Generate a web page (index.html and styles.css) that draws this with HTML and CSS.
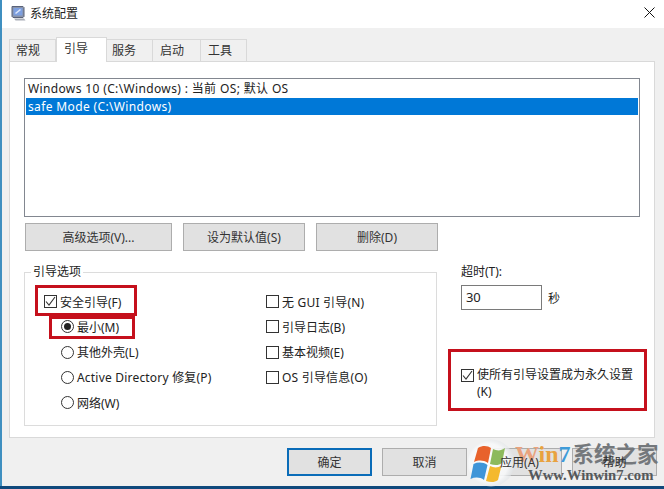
FILE: index.html
```html
<!DOCTYPE html>
<html lang="zh-CN">
<head>
<meta charset="utf-8">
<title>系统配置</title>
<link rel="stylesheet" href="styles.css">
</head>
<body>
<div class="window">
  <header class="titlebar">
    <svg class="app-icon" width="17" height="17" viewBox="0 0 17 17">
      <path d="M2 1.500h11l1 1v9l-1 1H3l-1-1z" fill="#8a94a8" stroke="#59627a"/>
      <path d="M3.500 3h9v7.500h-9z" fill="#7d9fe0"/>
      <path d="M5 8l5-4 1 1-5 4z" fill="#dfe8fa"/>
      <path d="M4 13.500h10l1.500 2H5.500z" fill="#a9aeb8"/>
    </svg>
    <span class="title-text">系统配置</span>
    <svg class="close" width="11" height="11" viewBox="0 0 11 11"><path d="M.5.5l10 10M10.500.5l-10 10" stroke="#111" stroke-width="1" fill="none"/></svg>
  </header>
  <main class="body">
    <nav class="tabs">
      <span class="tab tab-first">常规</span>
      <span class="tab tab-active">引导</span>
      <span class="tab tab-3">服务</span>
      <span class="tab tab-4">启动</span>
      <span class="tab tab-5">工具</span>
    </nav>
    <section class="panel">
      <div class="listbox">
        <div class="list-row">Windows 10 (C:\Windows) : 当前 OS; 默认 OS</div>
        <div class="list-row selected">safe Mode (C:\Windows)</div>
      </div>
      <div class="list-buttons">
        <button class="btn btn-wide">高级选项(V)...</button>
        <button class="btn btn-mid">设为默认值(S)</button>
        <button class="btn btn-mid">删除(D)</button>
      </div>
      <div class="options">
        <fieldset class="group">
          <legend class="group-label">引导选项</legend>
          <div class="group-cols">
            <div class="col col-left">
              <label class="opt"><span class="check"><svg width="11" height="11" viewBox="0 0 11 11"><path d="M1 5.500l3 3.500 6-8" fill="none" stroke="#333" stroke-width="1.100"/></svg></span>安全引导(F)</label>
              <label class="opt indent"><span class="radio on"></span>最小(M)</label>
              <label class="opt indent"><span class="radio"></span>其他外壳(L)</label>
              <label class="opt indent"><span class="radio"></span><span class="spaced">Active Directory 修复(P)</span></label>
              <label class="opt indent"><span class="radio"></span>网络(W)</label>
            </div>
            <div class="col col-right">
              <label class="opt"><span class="check"></span><span class="spaced">无 GUI 引导(N)</span></label>
              <label class="opt"><span class="check"></span>引导日志(B)</label>
              <label class="opt"><span class="check"></span>基本视频(E)</label>
              <label class="opt"><span class="check"></span><span class="spaced">OS 引导信息(O)</span></label>
            </div>
          </div>
        </fieldset>
        <div class="side">
          <div class="timeout-label">超时(T):</div>
          <div class="timeout-row"><span class="input">30</span><span class="unit">秒</span></div>
          <label class="permanent"><span class="check"><svg width="11" height="11" viewBox="0 0 11 11"><path d="M1 5.500l3 3.500 6-8" fill="none" stroke="#333" stroke-width="1.100"/></svg></span><span class="permanent-text">使所有引导设置成为永久设置<br>(K)</span></label>
        </div>
      </div>
    </section>
    <footer class="actions">
      <button class="btn btn-action btn-default"><span class="btn-label">确定</span></button>
      <button class="btn btn-action"><span class="btn-label">取消</span></button>
      <button class="btn btn-action"><span class="btn-label">应用(A)</span></button>
      <button class="btn btn-action"><span class="btn-label">帮助</span></button>
    </footer>
  </main>
  <div class="mark mark-1"></div>
  <div class="mark mark-2"></div>
  <div class="mark mark-3"></div>
  <div class="task-edge"></div>
  <div class="watermark">
    <svg class="wm-logo" width="48" height="48" viewBox="0 0 48 48">
      <defs>
        <radialGradient id="wm-glow" cx="45%" cy="50%" r="55%">
          <stop offset="0" stop-color="#ffffff" stop-opacity=".95"/>
          <stop offset=".75" stop-color="#f7f8f9" stop-opacity=".9"/>
          <stop offset="1" stop-color="#dfe3e6" stop-opacity=".55"/>
        </radialGradient>
      </defs>
      <circle cx="24" cy="24" r="23.500" fill="url(#wm-glow)"/>
      <path d="M11 9C16 6 21 7 24 9L21 24C16 21 12 21 7 23Z" fill="#e8622c"/>
      <path d="M26 10C30 12 34 12 38 9L35 24C31 27 27 26 23 25Z" fill="#8dba5c"/>
      <path d="M6.500 25C11 23 16 23 20.500 26L17 41C13 38 8 38 3.500 40Z" fill="#3f95d8"/>
      <path d="M23 27C27 29 31 29 34.500 26.500L31 41C27 44 23 43 19 42Z" fill="#f4b92e"/>
    </svg>
    <div class="wm-title"><span class="wm-w">W</span><span class="wm-in">in</span><span class="wm-7">7</span><span class="wm-cn">系统之家</span></div>
    <div class="wm-url">Www.Winwin7.com</div>
  </div>
</div>
</body>
</html>
```
FILE: styles.css
```css
* { box-sizing: border-box; }
html, body { margin: 0; padding: 0; }
body {
  width: 664px;
  height: 489px;
  overflow: hidden;
  font-family: "Noto Sans", "Noto Sans CJK SC", sans-serif;
  font-size: 12px;
  color: #222;
}
.window {
  position: relative;
  width: 664px;
  height: 489px;
  display: flex;
  flex-direction: column;
  background: #f0f0f0;
  border-left: 2px solid #3f8fc0;
}
.titlebar {
  height: 28px;
  flex: none;
  background: #fff;
  display: flex;
  align-items: center;
  padding: 0 9px 0 8px;
}
.app-icon { margin-right: 3px; margin-top: -2px; }
.title-text { flex: 1; margin-top: -2px; }
.close { margin-top: -4px; }
.body {
  flex: 1;
  display: flex;
  flex-direction: column;
  padding: 9px 0 0 7px;
}
.tabs {
  display: flex;
  align-items: flex-end;
  height: 24px;
  flex: none;
  position: relative;
  z-index: 1;
}
.tab {
  height: 22px;
  display: flex;
  align-items: center;
  background: #f0f0f0;
  border: 1px solid #d9d9d9;
  border-bottom: 0;
  border-left: 0;
  color: #333;
  padding-bottom: 1px;
}
.tab-first { width: 47px; border-left: 1px solid #d9d9d9; padding-left: 6px; }
.tab-active {
  width: 51px;
  height: 25px;
  background: #fff;
  border: 1px solid #d9d9d9;
  border-bottom: 0;
  margin-bottom: -1px;
  padding: 0 0 4px 7px;
}
.tab-3 { width: 46px; padding-left: 5px; }
.tab-4 { width: 48px; padding-left: 7px; }
.tab-5 { width: 46px; padding-left: 7px; }
.panel {
  width: 646px;
  height: 377px;
  flex: none;
  background: #fff;
  border: 1px solid #d9d9d9;
  padding: 16px 14px 0 14px;
}
.listbox {
  width: 616px;
  height: 139px;
  border: 1px solid #828790;
  padding: 1px;
  background: #fff;
}
.list-row {
  height: 17px;
  line-height: 18px;
  padding-left: 2px;
  letter-spacing: .36px;
}
.list-row.selected {
  background: #0078d7;
  color: #fff;
  margin-top: 1px;
  line-height: 17px;
}
.list-buttons {
  display: flex;
  gap: 11px;
  margin-top: 6px;
  padding-left: 1px;
}
.btn {
  font: inherit;
  height: 28px;
  padding: 0;
  background: #e1e1e1;
  border: 1px solid #adadad;
  color: #333;
}
.btn-wide { width: 147px; }
.btn-mid { width: 122px; }
.options {
  display: flex;
  gap: 24px;
  margin-top: 13px;
}
.group {
  width: 415px;
  height: 162px;
  margin: 0;
  padding: 9px 0 0;
  border: 1px solid #dcdcdc;
}
.group-label {
  margin-left: 6px;
  padding: 0 2px;
  line-height: 16px;
  font-size: 12px;
}
.group-cols { display: flex; }
.col { display: grid; grid-auto-rows: 25.25px; }
.col-left { width: 241px; padding-left: 19px; }
.opt { display: flex; align-items: center; gap: 3px; white-space: nowrap; }
.opt.indent { padding-left: 17px; gap: 3px; }
.spaced { letter-spacing: .2px; }
.check {
  width: 13px;
  height: 13px;
  flex: none;
  border: 1px solid #333;
  background: #fff;
  display: inline-flex;
}
.radio {
  width: 13px;
  height: 13px;
  flex: none;
  border: 1px solid #333;
  border-radius: 50%;
  background: #fff;
  position: relative;
}
.radio.on::after {
  content: "";
  position: absolute;
  inset: 2px;
  border-radius: 50%;
  background: #222;
}
.side { width: 180px; }
.timeout-label { line-height: 16px; height: 16px; }
.timeout-row { display: flex; align-items: center; gap: 6px; margin-top: 5px; }
.input {
  width: 81px;
  height: 25px;
  border: 1px solid #7a7a7a;
  background: #fff;
  line-height: 22px;
  padding-left: 4px;
  font-size: 13px;
}
.permanent {
  display: flex;
  gap: 3px;
  margin-top: 56px;
  align-items: flex-start;
}
.permanent .check { margin-top: 3px; }
.permanent-text { line-height: 17px; white-space: nowrap; }
.actions {
  display: flex;
  gap: 10px;
  margin-top: 10px;
  padding-left: 278px;
}
.btn-action { width: 85px; }
.btn-default { border: 2px solid #0a6cb8; }
.btn-label { position: relative; z-index: 3; }
.mark {
  position: absolute;
  border: 3px solid #c5101c;
  pointer-events: none;
}
.mark-1 { left: 33px; top: 285px; width: 102px; height: 31px; }
.mark-2 { left: 47px; top: 316px; width: 86px; height: 23px; }
.mark-3 { left: 446px; top: 349px; width: 199px; height: 62px; }
.task-edge {
  position: absolute;
  left: -2px;
  right: 0;
  bottom: 0;
  height: 3px;
  background: #10497c;
}
.watermark {
  position: absolute;
  z-index: 2;
  left: 465px;
  top: 439px;
  width: 197px;
  height: 48px;
}
.wm-logo { position: absolute; left: 0; top: 0; }
.wm-title {
  position: absolute;
  left: 48px;
  top: 0;
  font-family: "Liberation Serif", "Noto Sans CJK SC", serif;
  font-weight: 700;
  font-size: 24px;
  line-height: 28px;
  white-space: nowrap;
}
.wm-w { color: #e9a27c; }
.wm-in { color: #e9a23f; }
.wm-7 { color: #3f9bd8; }
.wm-cn {
  color: #74787c;
  font-size: 21.500px;
  margin-left: 2px;
  font-family: "Noto Sans CJK SC", sans-serif;
}
.wm-url {
  position: absolute;
  left: 61px;
  top: 28px;
  font-family: "Liberation Serif", serif;
  font-weight: 700;
  font-size: 14.700px;
  line-height: 16px;
  color: #55585b;
  white-space: nowrap;
}
```
